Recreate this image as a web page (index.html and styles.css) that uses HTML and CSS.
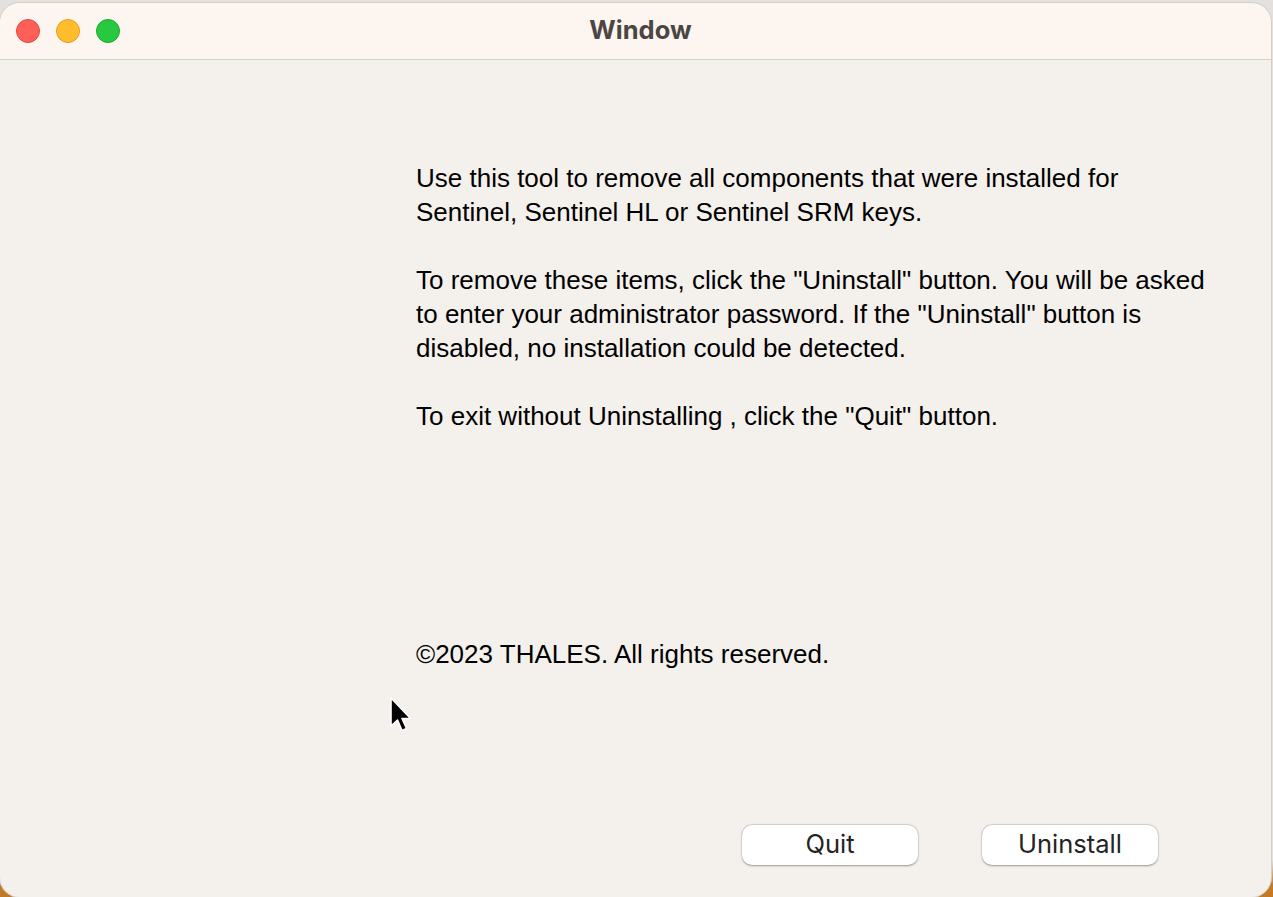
FILE: index.html
```html
<!DOCTYPE html>
<html>
<head>
<meta charset="utf-8">
<link rel="stylesheet" href="styles.css">
</head>
<body>
<div class="window">
  <div class="titlebar">
    <div class="lights">
      <span class="light red"></span>
      <span class="light yellow"></span>
      <span class="light green"></span>
    </div>
    <div class="title">Window</div>
  </div>
  <div class="content">
    <div class="message">
      <p>Use this tool to remove all components that were installed for<br>Sentinel, Sentinel HL or Sentinel SRM keys.</p>
      <p>To remove these items, click the "Uninstall" button. You will be asked<br>to enter your administrator password. If the "Uninstall" button is<br>disabled, no installation could be detected.</p>
      <p>To exit without Uninstalling , click the "Quit" button.</p>
    </div>
    <div class="copyright">©2023 THALES. All rights reserved.</div>
    <div class="buttons">
      <button class="btn">Quit</button>
      <button class="btn">Uninstall</button>
    </div>
  </div>
  <svg class="cursor" width="24" height="38" viewBox="0 0 24 38">
    <path d="M2 1 L2 29 L8.5 23 L13 33.5 L17.5 31.5 L13 21.5 L21.5 21.5 Z" fill="#000" stroke="#fff" stroke-width="1.6" stroke-linejoin="round"/>
  </svg>
</div>
</body>
</html>
```
FILE: styles.css
```css
html, body {
  margin: 0;
  padding: 0;
  height: 100%;
}
body {
  background: linear-gradient(to bottom, #e3e0dd 0, #e3e0dd 860px, #c27a26 885px);
  overflow: hidden;
}
.window {
  position: relative;
  margin-top: 3px;
  width: 1271px;
  height: 894px;
  border-radius: 20px;
  overflow: hidden;
  background: #f4f0ec;
  box-shadow: 0 0 0 1px #d3cfcb;
  display: flex;
  flex-direction: column;
}
.titlebar {
  height: 56px;
  background: #fdf5f0;
  border-bottom: 1px solid #d4cfcb;
  display: flex;
  align-items: center;
  position: relative;
  flex-shrink: 0;
}
.lights {
  display: flex;
  gap: 16px;
  padding-left: 16px;
}
.light {
  width: 24px;
  height: 24px;
  border-radius: 50%;
  box-sizing: border-box;
}
.red { background: #fe5f57; border: 1px solid #e2463f; }
.yellow { background: #febc2e; border: 1px solid #e1a116; }
.green { background: #28c840; border: 1px solid #1aab29; }
.title {
  position: absolute;
  left: 0;
  right: 0;
  top: 11px;
  padding-left: 10px;
  text-align: center;
  font-family: "Inter", "Liberation Sans", sans-serif;
  font-weight: 700;
  font-size: 25.5px;
  line-height: 32px;
  color: #4b4644;
}
.content {
  flex: 1;
  display: flex;
  flex-direction: column;
  padding: 101px 0 0 416px;
  font-family: "Liberation Sans", Arial, sans-serif;
  color: #000;
}
.message p {
  margin: 0 0 34px 0;
  font-size: 26px;
  line-height: 34px;
}
.copyright {
  margin-top: 170px;
  font-size: 26px;
  line-height: 34px;
}
.buttons {
  margin-top: 154px;
  display: flex;
  gap: 64px;
  padding-left: 326px;
}
.btn {
  width: 176px;
  height: 40px;
  border: none;
  border-radius: 10px;
  background: #fff;
  box-shadow: 0 0.5px 2px rgba(0,0,0,0.35), 0 0 0 0.5px rgba(0,0,0,0.08);
  font-family: "Inter", "Liberation Sans", sans-serif;
  font-size: 25.5px;
  color: #242424;
  padding: 0 0 4px 0;
}
.cursor {
  position: absolute;
  left: 389px;
  top: 694px;
}
```
